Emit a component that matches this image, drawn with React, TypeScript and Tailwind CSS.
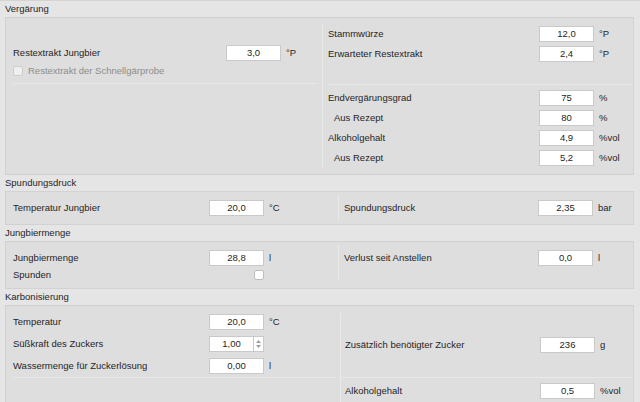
import React from "react";

const Field = ({ value }: { value: string }) => (
  <div className="w-[55px] h-[16px] shrink-0 bg-white border border-[#c9c9c9] flex items-center justify-center text-[#1e1e1e]">
    {value}
  </div>
);

const Spin = ({ value }: { value: string }) => (
  <div className="flex h-[16px] shrink-0">
    <div className="w-[45px] h-[16px] bg-white border border-[#c9c9c9] flex items-center justify-center text-[#1e1e1e]">
      {value}
    </div>
    <div className="w-[10px] h-[16px] bg-white border border-l-0 border-[#c9c9c9] flex flex-col items-center justify-center gap-[2px]">
      <svg width="5" height="3" viewBox="0 0 5 3">
        <path d="M0 3 L2.5 0 L5 3 Z" fill="#9a9a9a" />
      </svg>
      <svg width="5" height="3" viewBox="0 0 5 3">
        <path d="M0 0 L2.5 3 L5 0 Z" fill="#9a9a9a" />
      </svg>
    </div>
  </div>
);

type RowProps = {
  label: string;
  labelW: number;
  children: React.ReactNode;
  unit?: string;
  indent?: boolean;
};

const Row = ({ label, labelW, children, unit, indent }: RowProps) => (
  <div className="flex items-center h-[16px]">
    <span className={`shrink-0 whitespace-nowrap ${indent ? "pl-[6px]" : ""}`} style={{ width: labelW }}>
      {label}
    </span>
    {children}
    {unit && <span className="ml-[5px] whitespace-nowrap">{unit}</span>}
  </div>
);

const Title = ({ text }: { text: string }) => (
  <div className="h-[16px] px-[5px] flex items-center text-[#1e1e1e]">{text}</div>
);

const Sep = ({ className = "" }: { className?: string }) => (
  <div className={`h-px bg-[#e9e9e9] ${className}`} />
);

const VLine = ({ className = "" }: { className?: string }) => (
  <div className={`w-px bg-[#e9e9e9] shrink-0 ${className}`} />
);

const Box = ({ className = "", children }: { className?: string; children: React.ReactNode }) => (
  <div className={`ml-[5px] mr-[6px] border border-[#d2d2d2] bg-[#dedede] flex ${className}`}>{children}</div>
);

export default function App() {
  return (
    <div className="w-[640px] h-[402px] overflow-hidden bg-[#e5e5e5] text-[9.5px] leading-none text-[#1e1e1e] font-['Liberation_Sans',Arial,sans-serif]">
      <div className="h-px bg-[#d4d4d4]" />

      {/* Vergärung */}
      <Title text="Vergärung" />
      <Box className="h-[158px]">
        <div className="w-[316px] shrink-0 flex flex-col pt-[27px]">
          <div className="pl-[7px]">
            <Row label="Restextrakt Jungbier" labelW={213} unit="°P">
              <Field value="3,0" />
            </Row>
          </div>
          <div className="pl-[7px] mt-[2px] h-[16px] flex items-center gap-[5px] text-[#8d8d8d]">
            <div className="w-[10px] h-[10px] bg-[#efefef] border border-[#cdcdcd] rounded-[2px]" />
            <span>Restextrakt der Schnellgärprobe</span>
          </div>
          <Sep className="ml-[7px] mr-[5px] mt-[4px]" />
        </div>
        <VLine className="my-[7px]" />
        <div className="flex-1 flex flex-col pt-[8px]">
          <div className="pl-[5px] flex flex-col gap-[4px]">
            <Row label="Stammwürze" labelW={211} unit="°P">
              <Field value="12,0" />
            </Row>
            <Row label="Erwarteter Restextrakt" labelW={211} unit="°P">
              <Field value="2,4" />
            </Row>
          </div>
          <Sep className="ml-[5px] mt-[22px]" />
          <div className="pl-[5px] mt-[5px] flex flex-col gap-[4px]">
            <Row label="Endvergärungsgrad" labelW={211} unit="%">
              <Field value="75" />
            </Row>
            <Row label="Aus Rezept" labelW={211} unit="%" indent>
              <Field value="80" />
            </Row>
            <Row label="Alkoholgehalt" labelW={211} unit="%vol">
              <Field value="4,9" />
            </Row>
            <Row label="Aus Rezept" labelW={211} unit="%vol" indent>
              <Field value="5,2" />
            </Row>
          </div>
        </div>
      </Box>

      {/* Spundungsdruck */}
      <Title text="Spundungsdruck" />
      <Box className="h-[34px]">
        <div className="w-[332px] shrink-0 pl-[7px] pt-[8px]">
          <Row label="Temperatur Jungbier" labelW={196} unit="°C">
            <Field value="20,0" />
          </Row>
        </div>
        <VLine className="mt-[3px] mb-[2px]" />
        <div className="flex-1 pl-[5px] pt-[8px]">
          <Row label="Spundungsdruck" labelW={194} unit="bar">
            <Field value="2,35" />
          </Row>
        </div>
      </Box>

      {/* Jungbiermenge */}
      <Title text="Jungbiermenge" />
      <Box className="h-[48px]">
        <div className="w-[332px] shrink-0 pl-[7px] pt-[8px] flex flex-col">
          <Row label="Jungbiermenge" labelW={196} unit="l">
            <Field value="28,8" />
          </Row>
          <div className="flex items-center h-[14px] mt-[2px]">
            <span className="w-[196px] shrink-0">Spunden</span>
            <div className="w-[55px] flex justify-end">
              <div className="w-[10px] h-[10px] bg-white border border-[#bdbdbd] rounded-[2px]" />
            </div>
          </div>
        </div>
        <VLine className="mt-[3px] mb-[7px]" />
        <div className="flex-1 pl-[5px] pt-[8px]">
          <Row label="Verlust seit Anstellen" labelW={194} unit="l">
            <Field value="0,0" />
          </Row>
        </div>
      </Box>

      {/* Karbonisierung */}
      <Title text="Karbonisierung" />
      <Box className="h-[120px]">
        <div className="w-[334px] shrink-0 pt-[8px] flex flex-col">
          <div className="pl-[7px] flex flex-col gap-[6px]">
            <Row label="Temperatur" labelW={196} unit="°C">
              <Field value="20,0" />
            </Row>
            <Row label="Süßkraft des Zuckers" labelW={196}>
              <Spin value="1,00" />
            </Row>
            <Row label="Wassermenge für Zuckerlösung" labelW={196} unit="l">
              <Field value="0,00" />
            </Row>
          </div>
          <Sep className="ml-[7px] mr-[5px] mt-[3px]" />
        </div>
        <VLine className="mt-[7px]" />
        <div className="flex-1 pt-[31px] flex flex-col">
          <div className="pl-[4px]">
            <Row label="Zusätzlich benötigter Zucker" labelW={195} unit="g">
              <Field value="236" />
            </Row>
          </div>
          <Sep className="mt-[24px]" />
          <div className="pl-[4px] mt-[5px]">
            <Row label="Alkoholgehalt" labelW={195} unit="%vol">
              <Field value="0,5" />
            </Row>
          </div>
        </div>
      </Box>
    </div>
  );
}
